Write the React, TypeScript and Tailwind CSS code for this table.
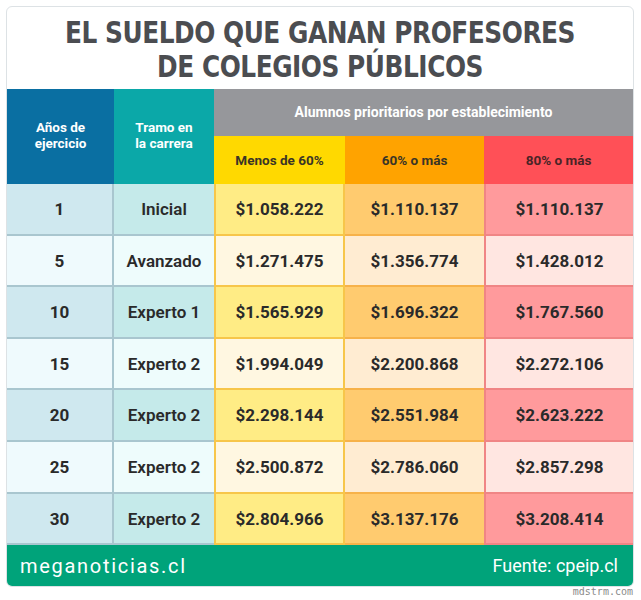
const rows = [
  { y: "1", t: "Inicial", a: "$1.058.222", b: "$1.110.137", c: "$1.110.137" },
  { y: "5", t: "Avanzado", a: "$1.271.475", b: "$1.356.774", c: "$1.428.012" },
  { y: "10", t: "Experto 1", a: "$1.565.929", b: "$1.696.322", c: "$1.767.560" },
  { y: "15", t: "Experto 2", a: "$1.994.049", b: "$2.200.868", c: "$2.272.106" },
  { y: "20", t: "Experto 2", a: "$2.298.144", b: "$2.551.984", c: "$2.623.222" },
  { y: "25", t: "Experto 2", a: "$2.500.872", b: "$2.786.060", c: "$2.857.298" },
  { y: "30", t: "Experto 2", a: "$2.804.966", b: "$3.137.176", c: "$3.208.414" },
]

const cell = "flex items-center justify-center h-[51.6px] pt-[2px] text-[17px] font-bold text-[#2a2a2a]"

export default function App() {
  return (
    <div className="w-[641px] h-[600px] bg-white pl-[6px] pt-[6px] font-['Roboto',sans-serif] relative">
      <div className="w-[628px] border border-[#dde2e5] rounded-md overflow-hidden">
        {/* title */}
        <div className="h-[82px] pt-[9px] text-center font-['DejaVu_Sans_Condensed',sans-serif] font-bold text-[30px] leading-[34px] text-[#4b4d51] tracking-[-0.5px] scale-x-[0.92]">
          <p>EL SUELDO QUE GANAN PROFESORES</p>
          <p>DE COLEGIOS PÚBLICOS</p>
        </div>

        {/* table header */}
        <div className="grid grid-cols-[107px_100px_131px_139px_149px] grid-rows-[47px_48px]">
          <div className="row-span-2 bg-[#0a6fa2] text-white font-bold text-[13.5px] leading-[16px] flex items-center justify-center text-center pb-[3px]">
            Años de
            <br />
            ejercicio
          </div>
          <div className="row-span-2 bg-[#0ba8a8] text-white font-bold text-[13.5px] leading-[16px] flex items-center justify-center text-center pb-[3px]">
            Tramo en
            <br />
            la carrera
          </div>
          <div className="col-span-3 bg-[#96979b] text-white font-bold text-[14px] flex items-center justify-center">
            Alumnos prioritarios por establecimiento
          </div>
          <div className="bg-[#ffd900] text-[#3a3526] font-bold text-[13.5px] flex items-center justify-center">Menos de 60%</div>
          <div className="bg-[#ffa300] text-[#3a3526] font-bold text-[13.5px] flex items-center justify-center">60% o más</div>
          <div className="bg-[#ff5057] text-[#4a2426] font-bold text-[13.5px] flex items-center justify-center">80% o más</div>
        </div>

        {/* table body */}
        <div className="grid grid-cols-[107px_100px_131px_139px_149px]">
          {rows.map((r, i) => {
            const odd = i % 2 === 0
            return [
              <div
                key={r.y + "a"}
                className={`${cell} border-r-2 border-b-2 border-[#a9c6cf] ${odd ? "bg-[#cfe8ef]" : "bg-[#effafd]"}`}
              >
                {r.y}
              </div>,
              <div
                key={r.y + "b"}
                className={`${cell} font-semibold border-b-2 border-[#a9c6cf] ${odd ? "bg-[#c5eaea]" : "bg-[#eefcfc]"}`}
              >
                {r.t}
              </div>,
              <div
                key={r.y + "c"}
                className={`${cell} border-l-2 border-r-2 border-b-2 border-[#f7c64a] ${odd ? "bg-[#ffec85]" : "bg-[#fff7e1]"}`}
              >
                {r.a}
              </div>,
              <div
                key={r.y + "d"}
                className={`${cell} border-b-2 border-[#f7b24a] ${odd ? "bg-[#ffcb6f]" : "bg-[#ffecd2]"}`}
              >
                {r.b}
              </div>,
              <div
                key={r.y + "e"}
                className={`${cell} border-l-2 border-b-2 border-[#f08585] ${odd ? "bg-[#ff9a9c]" : "bg-[#ffe6e1]"}`}
              >
                {r.c}
              </div>,
            ]
          })}
        </div>

        {/* footer */}
        <div className="h-[41px] bg-[#00a37a] flex items-center justify-between pl-[13px] pr-[15px] text-white">
          <span className="text-[20px] tracking-[1.7px] font-['Roboto',sans-serif]">meganoticias.cl</span>
          <span className="text-[18px] font-['Roboto',sans-serif]">Fuente: cpeip.cl</span>
        </div>
      </div>
      <span className="absolute right-[8px] top-[584px] text-[10px] text-[#8a8a8a] font-['DejaVu_Sans_Mono',monospace]">
        mdstrm.com
      </span>
    </div>
  )
}
